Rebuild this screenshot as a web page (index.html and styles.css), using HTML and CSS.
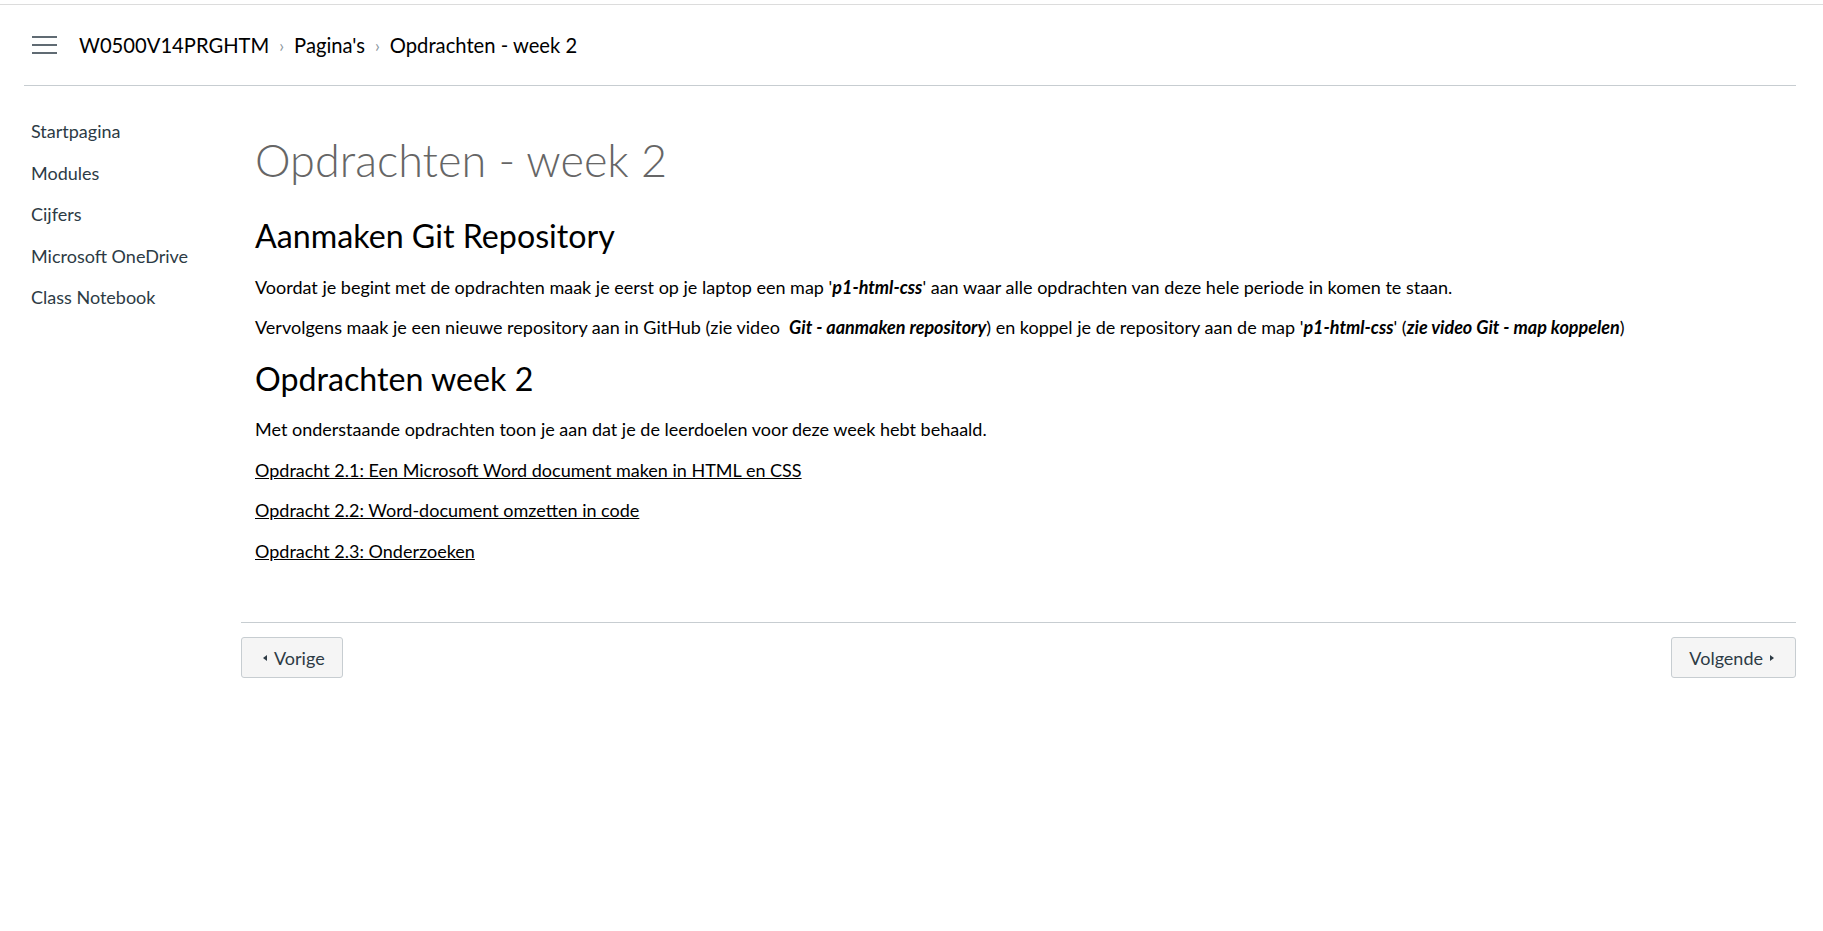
FILE: index.html
```html
<!DOCTYPE html>
<html lang="nl">
<head>
<meta charset="utf-8">
<title>Opdrachten - week 2</title>
<link rel="stylesheet" href="styles.css">
</head>
<body>
<div class="topline"></div>
<header class="header">
  <button class="burger" aria-label="Menu">
    <svg width="27" height="20" viewBox="0 0 27 20"><path d="M1 2h25M1 10h25M1 18h25" stroke="#2d3b45" stroke-width="1.7" fill="none"/></svg>
  </button>
  <nav class="crumbs">
    <span>W0500V14PRGHTM</span>
    <span class="sep">›</span>
    <span>Pagina's</span>
    <span class="sep">›</span>
    <span>Opdrachten - week 2</span>
  </nav>
</header>
<div class="main">
  <aside class="sidenav">
    <a>Startpagina</a>
    <a>Modules</a>
    <a>Cijfers</a>
    <a>Microsoft OneDrive</a>
    <a>Class Notebook</a>
  </aside>
  <section class="content">
    <div class="article">
      <h1 class="title">Opdrachten - week 2</h1>
      <h2>Aanmaken Git Repository</h2>
      <p>Voordat je begint met de opdrachten maak je eerst op je laptop een map '<strong><em>p1-html-css</em></strong>' aan waar alle opdrachten van deze hele periode in komen te staan.</p>
      <p>Vervolgens maak je een nieuwe repository aan in GitHub (zie video &nbsp;<strong><em>Git - aanmaken repository</em></strong>) en koppel je de repository aan de map '<strong><em>p1-html-css</em></strong>' (<strong><em>zie video Git - map koppelen</em></strong>)</p>
      <h2 class="second">Opdrachten week 2</h2>
      <p>Met onderstaande opdrachten toon je aan dat je de leerdoelen voor deze week hebt behaald.</p>
      <p><a href="#">Opdracht 2.1: Een Microsoft Word document maken in HTML en CSS</a></p>
      <p><a href="#">Opdracht 2.2: Word-document omzetten in code</a></p>
      <p><a href="#">Opdracht 2.3: Onderzoeken</a></p>
    </div>
    <div class="pager">
      <button class="btn prev"><span class="tri left"></span>Vorige</button>
      <button class="btn next">Volgende<span class="tri right"></span></button>
    </div>
  </section>
</div>
</body>
</html>
```
FILE: styles.css
```css
* { box-sizing: border-box; }
html, body { margin: 0; padding: 0; background: #fff; }
body {
  font-family: Lato, "Liberation Sans", sans-serif;
  color: #2d3b45;
}
.topline {
  margin-top: 4px;
  height: 1px;
  background: #dcdcdc;
}
.header {
  display: flex;
  align-items: center;
  height: 81px;
  margin: 0 27px 0 24px;
  padding-left: 7px;
  border-bottom: 1px solid #c7cdd1;
}
.burger {
  border: 0;
  background: none;
  padding: 0;
  width: 27px;
  height: 20px;
  margin-right: 21px;
  display: flex;
}
.crumbs {
  display: flex;
  align-items: center;
  font-size: 20.2px;
  color: #000;
}
.crumbs .sep {
  color: #8b969e;
  font-size: 17px;
  margin: 0 10px;
}
.main {
  display: flex;
  margin: 0 27px 0 24px;
}
.sidenav {
  width: 217px;
  padding: 25px 0 0 7px;
  display: flex;
  flex-direction: column;
}
.sidenav a {
  font-size: 18px;
  line-height: 27px;
  padding: 7.25px 0;
  color: #2d3b45;
}
.content {
  flex: 1;
}
.article {
  padding: 47px 14px 57px;
  color: #000;
  font-size: 18px;
}
.title {
  font-weight: 300;
  font-size: 45px;
  line-height: 54px;
  color: #666;
  margin: 0 0 29px;
}
.article h2 {
  font-weight: 400;
  font-size: 32.2px;
  line-height: 40px;
  margin: 0 0 17.5px;
}
.article h2.second {
  margin-top: 18.3px;
  margin-bottom: 16.5px;
}
.article p {
  margin: 0 0 13.7px;
  line-height: 27px;
}
.article p:last-child { margin-bottom: 0; }
.article a { color: #000; text-decoration: underline; }
.pager {
  border-top: 1px solid #c7cdd1;
  padding-top: 14px;
  display: flex;
  justify-content: space-between;
}
.btn {
  font-family: Lato, "Liberation Sans", sans-serif;
  font-size: 18px;
  color: #2d3b45;
  background: #f5f5f5;
  border: 1px solid #c7cdd1;
  border-radius: 3px;
  height: 41px;
  padding: 0 17px;
  display: flex;
  align-items: center;
  gap: 7px;
}
.btn.prev { padding-left: 21px; }
.btn.next { padding-right: 21px; }
.tri { width: 0; height: 0; border-top: 3.5px solid transparent; border-bottom: 3.5px solid transparent; }
.tri.left { border-right: 4px solid #2d3b45; }
.tri.right { border-left: 4px solid #2d3b45; }
```
